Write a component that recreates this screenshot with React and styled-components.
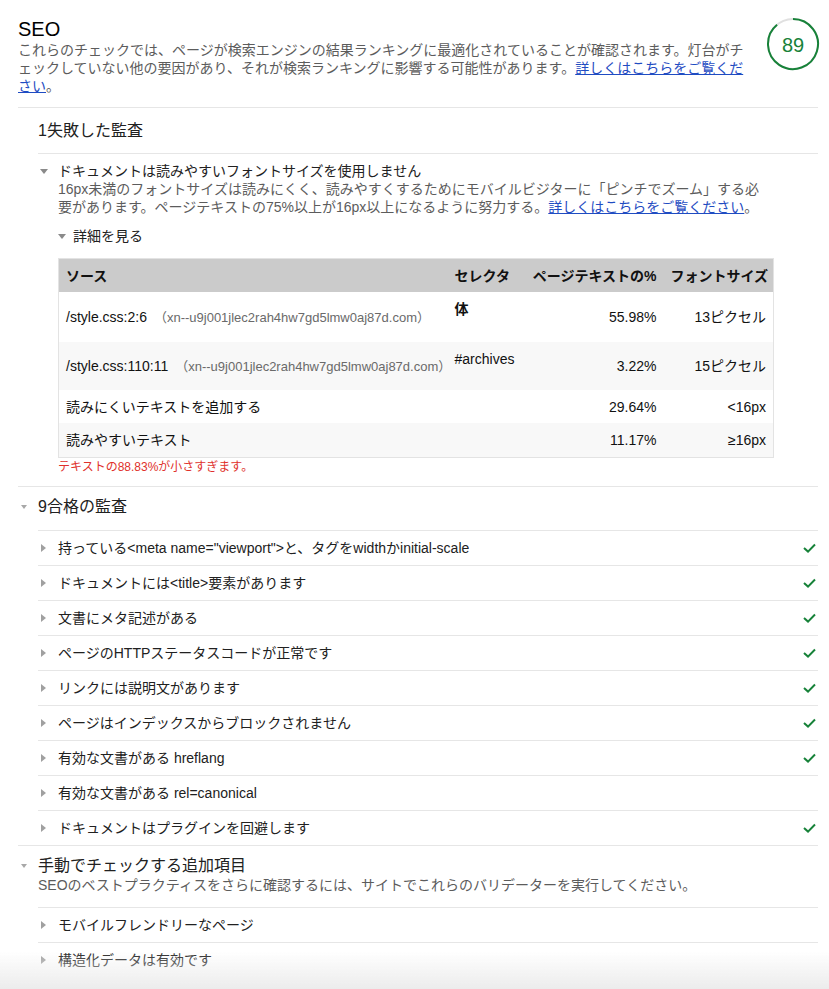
import React from "react";
import styled, { createGlobalStyle } from "styled-components";

const GlobalStyle = createGlobalStyle`
  html, body {
    margin: 0;
    padding: 0;
    background: #fff;
    overflow: hidden;
  }
  body {
    font-family: "Liberation Sans", "Noto Sans CJK JP", sans-serif;
    text-spacing-trim: space-all;
  }
`;

const passedAudits = [
  { title: '持っている<meta name="viewport">と、タグをwidthかinitial-scale', pass: true },
  { title: "ドキュメントには<title>要素があります", pass: true },
  { title: "文書にメタ記述がある", pass: true },
  { title: "ページのHTTPステータスコードが正常です", pass: true },
  { title: "リンクには説明文があります", pass: true },
  { title: "ページはインデックスからブロックされません", pass: true },
  { title: "有効な文書がある hreflang", pass: true },
  { title: "有効な文書がある rel=canonical", pass: false },
  { title: "ドキュメントはプラグインを回避します", pass: true },
];

const manualAudits = ["モバイルフレンドリーなページ", "構造化データは有効です"];

const fontRows = [
  { source: "/style.css:2:6", host: "（xn--u9j001jlec2rah4hw7gd5lmw0aj87d.com）", selector: "体", bold: true, pct: "55.98%", size: "13ピクセル", h: 50 },
  { source: "/style.css:110:11", host: "（xn--u9j001jlec2rah4hw7gd5lmw0aj87d.com）", selector: "#archives", pct: "3.22%", size: "15ピクセル", h: 48, alt: true },
  { label: "読みにくいテキストを追加する", pct: "29.64%", size: "<16px", h: 33 },
  { label: "読みやすいテキスト", pct: "11.17%", size: "≥16px", h: 34, alt: true },
];

// 89% of the ring, clockwise from 12 o'clock
const R = 25;
const endAngle = (0.89 * 360 * Math.PI) / 180;
const arcEnd = [28 + R * Math.sin(endAngle), 28 - R * Math.cos(endAngle)];

export default function App() {
  return (
    <>
      <GlobalStyle />
      <Page lang="ja">
        <Header>
          <HeaderText>
            <Title>SEO</Title>
            <Desc>
              これらのチェックでは、ページが検索エンジンの結果ランキングに最適化されていることが確認されます。灯台がチェックしていない他の要因があり、それが検索ランキングに影響する可能性があります。<Link href="#">詳しくはこちらをご覧ください</Link>。
            </Desc>
          </HeaderText>
          <GaugeBox>
            <svg width="56" height="56" viewBox="0 0 56 56">
              <circle cx="28" cy="28" r={R} fill="none" stroke="#e0e0e0" strokeWidth="2" />
              <path
                d={`M 28 ${28 - R} A ${R} ${R} 0 1 1 ${arcEnd[0].toFixed(2)} ${arcEnd[1].toFixed(2)}`}
                fill="none"
                stroke="#178239"
                strokeWidth="2"
              />
              <GaugeText x="28" y="29" textAnchor="middle" dominantBaseline="central">
                89
              </GaugeText>
            </svg>
          </GaugeBox>
        </Header>

        <Group>
          <GroupHead>
            <Slot $w={20} $top={14} />
            <GroupHeadBody $pt={13} $pb={12}>
              <GroupTitle>1失敗した監査</GroupTitle>
            </GroupHeadBody>
          </GroupHead>
          <FailedAudit>
            <Slot $w={20}>
              <Tri $dir="down" $w={8} $h={5} $color="#8a8a8a" $ml={2} />
            </Slot>
            <AuditBody>
              <AuditTitle>ドキュメントは読みやすいフォントサイズを使用しません</AuditTitle>
              <Desc>
                16px未満のフォントサイズは読みにくく、読みやすくするためにモバイルビジターに「ピンチでズーム」する必要があります。ページテキストの75%以上が16px以上になるように努力する。<Link href="#">詳しくはこちらをご覧ください</Link>。
              </Desc>
              <Summary>
                <Slot $w={15}>
                  <Tri $dir="down" $w={8} $h={5} $color="#8a8a8a" $ml={0} />
                </Slot>
                詳細を見る
              </Summary>
              <Table>
                <colgroup>
                  <Col $w={389} />
                  <Col $w={78} />
                  <Col $w={138} />
                  <Col $w={110} />
                </colgroup>
                <thead>
                  <tr>
                    <Th>ソース</Th>
                    <Th>セレクタ</Th>
                    <Th $right>ページテキストの%</Th>
                    <Th $right>フォントサイズ</Th>
                  </tr>
                </thead>
                <tbody>
                  {fontRows.map((r, i) => (
                    <Tr key={i} $alt={r.alt} $h={r.h}>
                      {r.label ? (
                        <Td colSpan={2}>{r.label}</Td>
                      ) : (
                        <>
                          <Td>
                            {r.source}
                            <Host>{r.host}</Host>
                          </Td>
                          <SelectorTd $bold={r.bold}>{r.selector}</SelectorTd>
                        </>
                      )}
                      <Td $right>{r.pct}</Td>
                      <Td $right>{r.size}</Td>
                    </Tr>
                  ))}
                </tbody>
              </Table>
              <ErrorNote>テキストの88.83%が小さすぎます。</ErrorNote>
            </AuditBody>
          </FailedAudit>
        </Group>

        <Group>
          <GroupHead>
            <Slot $w={20} $top={11}>
              <Tri $dir="down" $w={6} $h={4} $color="#a8a8a8" $ml={3} />
            </Slot>
            <GroupHeadBody $pt={10} $pb={13}>
              <GroupTitle>9合格の監査</GroupTitle>
            </GroupHeadBody>
          </GroupHead>
          {passedAudits.map((a, i) => (
            <Row key={i} $last={i === passedAudits.length - 1}>
              <Slot $w={20}>
                <Tri $dir="right" $w={5} $h={8} $color="#a0a0a0" $ml={3} />
              </Slot>
              <RowTitle>{a.title}</RowTitle>
              {a.pass && (
                <CheckMark width="13" height="10" viewBox="0 0 13 10">
                  <path d="M1 5 L5 8.6 L12 1.5" fill="none" stroke="#178239" strokeWidth="2" />
                </CheckMark>
              )}
            </Row>
          ))}
        </Group>

        <Group $noBorder>
          <GroupHead>
            <Slot $w={20} $top={11}>
              <Tri $dir="down" $w={6} $h={4} $color="#a8a8a8" $ml={3} />
            </Slot>
            <GroupHeadBody $pt={10} $pb={13}>
              <GroupTitle>手動でチェックする追加項目</GroupTitle>
              <Desc>SEOのベストプラクティスをさらに確認するには、サイトでこれらのバリデーターを実行してください。</Desc>
            </GroupHeadBody>
          </GroupHead>
          {manualAudits.map((t, i) => (
            <Row key={i} $last={i === manualAudits.length - 1}>
              <Slot $w={20}>
                <Tri $dir="right" $w={5} $h={8} $color="#a0a0a0" $ml={3} />
              </Slot>
              <RowTitle>{t}</RowTitle>
            </Row>
          ))}
        </Group>
      </Page>
      <BottomFade />
    </>
  );
}

const Page = styled.div`
  padding: 0 11px 0 18px;
  color: #212121;
  font-size: 14px;
  line-height: 18px;
`;

const Header = styled.header`
  display: flex;
  align-items: flex-start;
  padding: 17px 0 12px;
  border-bottom: 1px solid #e6e6e6;
`;

const HeaderText = styled.div`
  flex: 1;
  min-width: 0;
`;

const Title = styled.h1`
  margin: 0;
  font-size: 20px;
  line-height: 24px;
  font-weight: normal;
  color: #000;
`;

const Desc = styled.p`
  margin: 0;
  color: #5c5c5c;
  line-height: 18px;
  line-break: loose;
`;

const Link = styled.a`
  color: #1f4cc2;
  text-decoration: underline;
`;

const GaugeBox = styled.div`
  width: 56px;
  height: 56px;
  flex-shrink: 0;
  margin: -1px -3px 0 9px;
`;

const GaugeText = styled.text`
  font-family: "Liberation Sans", sans-serif;
  font-size: 20px;
  fill: #178239;
`;

const Group = styled.section`
  border-bottom: ${(p) => (p.$noBorder ? "none" : "1px solid #e6e6e6")};
`;

const GroupHead = styled.div`
  display: flex;
  align-items: flex-start;
`;

const Slot = styled.div`
  width: ${(p) => p.$w}px;
  height: 18px;
  margin-top: ${(p) => p.$top || 0}px;
  flex-shrink: 0;
  display: flex;
  align-items: center;
`;

const GroupHeadBody = styled.div`
  flex: 1;
  padding: ${(p) => p.$pt}px 0 ${(p) => p.$pb}px;
  border-bottom: 1px solid #e6e6e6;
`;

const GroupTitle = styled.h2`
  margin: 0;
  font-size: 16px;
  line-height: 20px;
  font-weight: normal;
  color: #212121;
`;

const Tri = styled.span`
  display: block;
  width: 0;
  height: 0;
  margin-left: ${(p) => p.$ml}px;
  ${(p) =>
    p.$dir === "down"
      ? `border-left: ${p.$w / 2}px solid transparent;
         border-right: ${p.$w / 2}px solid transparent;
         border-top: ${p.$h}px solid ${p.$color};`
      : `border-top: ${p.$h / 2}px solid transparent;
         border-bottom: ${p.$h / 2}px solid transparent;
         border-left: ${p.$w}px solid ${p.$color};`}
`;

const FailedAudit = styled.div`
  display: flex;
  align-items: flex-start;
  margin-left: 20px;
  padding: 8px 0 11px;
`;

const AuditBody = styled.div`
  flex: 1;
  min-width: 0;
  padding-right: 52px;
`;

const AuditTitle = styled.div`
  color: #212121;
`;

const Summary = styled.div`
  display: flex;
  align-items: center;
  margin-top: 11px;
  color: #212121;
`;

const Table = styled.table`
  margin-top: 13px;
  width: 715px;
  table-layout: fixed;
  border-collapse: collapse;
  border: 1px solid #e3e3e3;
  font-size: 14px;
`;

const Col = styled.col`
  width: ${(p) => p.$w}px;
`;

const Th = styled.th`
  height: 33px;
  padding: 0 7px;
  background: #cbcbcb;
  font-weight: bold;
  color: #111;
  text-align: ${(p) => (p.$right ? "right" : "left")};
  white-space: nowrap;
`;

const Tr = styled.tr`
  height: ${(p) => p.$h}px;
  background: ${(p) => (p.$alt ? "#f8f8f8" : "#fff")};
`;

const Td = styled.td`
  padding: 0 7px;
  vertical-align: middle;
  text-align: ${(p) => (p.$right ? "right" : "left")};
  white-space: nowrap;
  color: #111;
`;

const SelectorTd = styled(Td)`
  vertical-align: top;
  padding-top: 8px;
  font-weight: ${(p) => (p.$bold ? "bold" : "normal")};
`;

const Host = styled.span`
  margin-left: 7px;
  font-size: 13px;
  color: #6a6a6a;
`;

const ErrorNote = styled.div`
  margin-top: 1px;
  font-size: 12px;
  line-height: 16px;
  color: #e0312b;
`;

const Row = styled.div`
  display: flex;
  align-items: center;
  margin-left: 20px;
  height: 34px;
  padding-right: 2px;
  border-bottom: ${(p) => (p.$last ? "none" : "1px solid #e6e6e6")};
`;

const RowTitle = styled.div`
  flex: 1;
  color: #212121;
`;

const CheckMark = styled.svg`
  flex-shrink: 0;
  display: block;
`;

const BottomFade = styled.div`
  position: fixed;
  left: 0;
  right: 0;
  bottom: 0;
  height: 38px;
  pointer-events: none;
  background: linear-gradient(to bottom, rgba(255, 255, 255, 0), #ececec);
`;
